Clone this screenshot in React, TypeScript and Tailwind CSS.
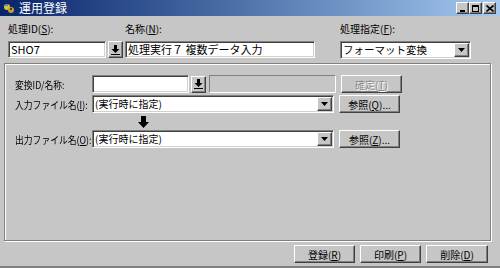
import React from "react";

const font = { fontFamily: '"MS UI Gothic", "Noto Sans CJK JP", sans-serif' };

const sunken =
  "border border-t-[#808080] border-l-[#808080] border-r-white border-b-white shadow-[inset_1px_1px_0_#404040,inset_-1px_-1px_0_#d4d0c8]";
const raised =
  "border border-t-white border-l-white border-r-[#404040] border-b-[#404040] shadow-[inset_-1px_-1px_0_#808080]";

function Mn({ children }: { children: React.ReactNode }) {
  return <span className="underline underline-offset-1">{children}</span>;
}

function PickButton() {
  return (
    <div className={`${raised} bg-[#c6c6c6] w-[15px] h-[17px] flex items-center justify-center`}>
      <svg width="9" height="10" viewBox="0 0 9 10">
        <path d="M3 0h3v4h2.5L4.5 8 0.5 4H3z" fill="#000" />
        <rect x="0" y="9" width="9" height="1" fill="#000" />
      </svg>
    </div>
  );
}

function ArrowBox() {
  return (
    <div className={`${raised} bg-[#c6c6c6] w-[15px] h-full flex items-center justify-center`}>
      <svg width="7" height="4" viewBox="0 0 7 4">
        <path d="M0 0h7L3.5 4z" fill="#000" />
      </svg>
    </div>
  );
}

function Combo({ value, w, size = "text-[10px]" }: { value: string; w: string; size?: string }) {
  return (
    <div className={`${sunken} bg-white ${w} h-[18px] flex items-stretch p-[1px]`}>
      <div className={`flex-1 px-[1px] leading-[14px] text-black whitespace-nowrap ${size}`}>{value}</div>
      <ArrowBox />
    </div>
  );
}

function Btn({ children, w = "w-[61px]", disabled = false }: { children: React.ReactNode; w?: string; disabled?: boolean }) {
  return (
    <div
      className={`${raised} bg-[#c6c6c6] ${w} h-[18px] flex items-center justify-center whitespace-nowrap text-[10px] ${
        disabled ? "text-[#8a8a8a] [text-shadow:1px_1px_0_#fff]" : "text-black"
      }`}
    >
      {children}
    </div>
  );
}

function Label({ children }: { children: React.ReactNode }) {
  return (
    <div className="w-[77px] shrink-0 whitespace-nowrap">
      <span className="inline-block text-[10px] origin-left scale-x-[0.88]">{children}</span>
    </div>
  );
}

export default function App() {
  return (
    <div style={font} className="w-[500px] h-[268px] bg-[#c6c6c6] text-[11px] text-black flex flex-col border-b-2 border-b-[#808080] overflow-hidden">
      {/* title bar */}
      <div className="h-[16px] shrink-0 bg-gradient-to-r from-[#0a246a] to-[#a6caf0] flex items-center px-[3px]">
        <svg width="12" height="12" viewBox="0 0 12 12" className="mr-[4px]">
          <circle cx="4" cy="5" r="3" fill="#d8c040" />
          <circle cx="8" cy="8" r="3" fill="#c8a020" />
          <rect x="2" y="2" width="3" height="2" fill="#6080c0" />
          <rect x="7" y="6" width="2" height="2" fill="#404040" />
        </svg>
        <span className="text-white text-[12px] leading-none">運用登録</span>
        <div className="ml-auto flex mr-[1px]">
          {[0, 1, 2].map((i) => (
            <div
              key={i}
              className={`${raised} bg-[#c6c6c6] w-[13px] h-[12px] flex items-end justify-center ${i === 2 ? "ml-[1px]" : ""}`}
            >
              {i === 0 ? (
                <div className="w-[5px] h-[2px] bg-black mb-[1px]" />
              ) : i === 1 ? (
                <div className="w-[7px] h-[7px] border border-black border-t-2 mb-[1px]" />
              ) : (
                <svg width="8" height="7" viewBox="0 0 8 7" className="mb-[1px]">
                  <path d="M0.5 0.5L7.5 6.5M7.5 0.5L0.5 6.5" stroke="#000" strokeWidth="1.6" />
                </svg>
              )}
            </div>
          ))}
        </div>
      </div>

      {/* top fields */}
      <div className="flex pl-[8px] pt-[6px] text-[10px]">
        <div className="w-[117px] flex flex-col">
          <div className="h-[14px] leading-[14px]">
            処理ID(<Mn>S</Mn>):
          </div>
          <div className="mt-[5px] flex items-center gap-[2px] text-[11px]">
            <div className={`${sunken} bg-white w-[98px] h-[17px] px-[2px] leading-[15px]`}>SHO7</div>
            <PickButton />
          </div>
        </div>
        <div className="w-[215px] flex flex-col">
          <div className="h-[14px] leading-[14px]">
            名称(<Mn>N</Mn>):
          </div>
          <div className={`mt-[5px] ${sunken} bg-white w-[190px] h-[17px] px-[2px] leading-[15px] text-[11px] whitespace-nowrap`}>
            処理実行７ 複数データ入力
          </div>
        </div>
        <div className="flex flex-col">
          <div className="h-[14px] leading-[14px]">
            処理指定(<Mn>F</Mn>):
          </div>
          <div className="mt-[5px]">
            <Combo value="フォーマット変換" w="w-[131px]" size="text-[10.5px]" />
          </div>
        </div>
      </div>

      {/* group box */}
      <div className="mt-[4px] ml-[4px] w-[487px] h-[178px] shrink-0 border border-[#808080] shadow-[inset_1px_1px_0_#fff,1px_1px_0_#fff] pl-[10px] pt-[11px] flex flex-col">
        <div className="flex items-center h-[18px]">
          <Label>変換ID/名称:</Label>
          <div className={`${sunken} bg-white w-[97px] h-[18px]`} />
          <div className="ml-[2px]">
            <PickButton />
          </div>
          <div className="ml-[3px] w-[127px] h-[18px] border border-t-[#808080] border-l-[#808080] border-r-white border-b-white bg-[#c6c6c6]" />
          <div className="ml-[5px]">
            <Btn disabled>
              確定(<Mn>T</Mn>)
            </Btn>
          </div>
        </div>
        <div className="flex items-center h-[18px] mt-[2px]">
          <Label>
            入力ファイル名(<Mn>I</Mn>):
          </Label>
          <Combo value="(実行時に指定)" w="w-[242px]" />
          <div className="ml-[5px]">
            <Btn>
              参照(<Mn>Q</Mn>)...
            </Btn>
          </div>
        </div>
        <div className="h-[17px] pl-[123px] flex items-center">
          <svg width="11" height="12" viewBox="0 0 11 12">
            <path d="M3 0h5v6h3l-5.5 6L0 6h3z" fill="#000" />
          </svg>
        </div>
        <div className="flex items-center h-[18px]">
          <Label>
            出力ファイル名(<Mn>O</Mn>):
          </Label>
          <Combo value="(実行時に指定)" w="w-[242px]" />
          <div className="ml-[5px]">
            <Btn>
              参照(<Mn>Z</Mn>)...
            </Btn>
          </div>
        </div>
      </div>

      {/* bottom buttons */}
      <div className="flex justify-end gap-[5px] pr-[12px] mt-[4px]">
        <Btn w="w-[61px]">
          登録(<Mn>R</Mn>)
        </Btn>
        <Btn w="w-[61px]">
          印刷(<Mn>P</Mn>)
        </Btn>
        <Btn w="w-[62px]">
          削除(<Mn>D</Mn>)
        </Btn>
      </div>
    </div>
  );
}
